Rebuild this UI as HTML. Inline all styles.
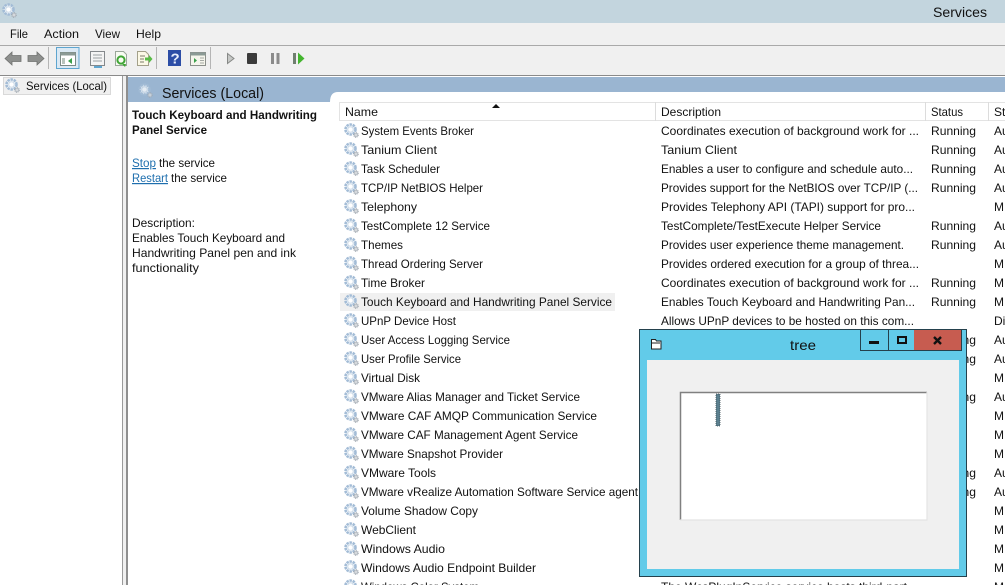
<!DOCTYPE html>
<html><head><meta charset="utf-8"><style>
html,body{margin:0;padding:0;background:#fff;width:1005px;height:585px;overflow:hidden}
svg{display:block}
text{font-family:"Liberation Sans",sans-serif;font-size:12px;fill:#111}
</style></head><body>
<svg width="1005" height="585" viewBox="0 0 1005 585" xmlns="http://www.w3.org/2000/svg">
<defs>
<g id="g">
<circle cx="6.500" cy="6.500" r="5" fill="#eef3f8" stroke="#a3bcd6" stroke-width="2.600" stroke-dasharray="2.400 .8"/>
<circle cx="6.500" cy="6.500" r="2.700" fill="#fff" stroke="#c5d5e4" stroke-width=".8"/>
<circle cx="12" cy="12" r="2.100" fill="#d5d9dd" stroke="#9ea6ae" stroke-width="1.300" stroke-dasharray="1 .6"/>
</g>
</defs>
<rect width="1005" height="23" fill="#c3d5de"/>
<use href="#g" x="2" y="3"/>
<text x="933" y="17" style="font-size:14px" textLength="54" lengthAdjust="spacingAndGlyphs">Services</text>
<rect y="23" width="1005" height="52" fill="#f0f0f0"/>
<rect y="45" width="1005" height="1" fill="#a9a9a9"/>
<text x="10" y="38" textLength="18" lengthAdjust="spacingAndGlyphs">File</text>
<text x="44" y="38" textLength="35" lengthAdjust="spacingAndGlyphs">Action</text>
<text x="95" y="38" textLength="25" lengthAdjust="spacingAndGlyphs">View</text>
<text x="136" y="38" textLength="25" lengthAdjust="spacingAndGlyphs">Help</text>

<!-- toolbar -->
<path d="M5 58.500l7-6.500v3.500h9v6h-9v3.500z" fill="#8d8f8d" stroke="#6f716f" stroke-width=".8"/>
<path d="M44 58.500l-7-6.500v3.500h-9v6h9v3.500z" fill="#8d8f8d" stroke="#6f716f" stroke-width=".8"/>
<rect x="48" y="47" width="1" height="22" fill="#b5b5b5"/>
<rect x="56.500" y="47.500" width="22.500" height="21" fill="#dbe9f4" stroke="#5ea5cf"/>
<rect x="60.500" y="52.500" width="15" height="13" fill="#fff" stroke="#7b8a85"/>
<rect x="60.500" y="52.500" width="15" height="3" fill="#8b9a95"/>
<path d="M72 58v6l-4-3z" fill="#3aa04a"/><rect x="62" y="58" width="3" height="6" fill="#b9c4bd"/>
<rect x="90.500" y="51.500" width="14" height="14" fill="#f4f4f4" stroke="#85898c"/>
<path d="M93 55h9M93 58h9M93 61h9" stroke="#9a9fa2"/><rect x="94" y="66" width="8" height="2" fill="#5ea5cf"/>
<path d="M115.500 51.500h8l3 3v11h-11z" fill="#f7fbf2" stroke="#9aa69a"/>
<circle cx="121" cy="60" r="3.600" fill="none" stroke="#3fa535" stroke-width="2"/><path d="M122 64l4 0-1 3z" fill="#3fa535"/>
<path d="M137.500 51.500h8l3 3v11h-11z" fill="#fbf8e6" stroke="#a3a08a"/>
<path d="M140 56h5M140 59h4M140 62h4" stroke="#7d7d6a"/><path d="M145 57.500h4v-2.500l3.500 4-3.500 4v-2.500h-4z" fill="#58bb45"/>
<rect x="156" y="47" width="1" height="22" fill="#b5b5b5"/>
<rect x="168" y="50" width="13" height="16" fill="#2c4da6"/>
<text x="170.500" y="63.500" style="font-size:15px;font-weight:bold;fill:#e8eefc">?</text>
<rect x="190.500" y="52.500" width="15" height="13" fill="#f5f5ec" stroke="#8b8f8a"/>
<rect x="190.500" y="52.500" width="15" height="3" fill="#8b9a95"/>
<path d="M194 58v5l3-2.500z" fill="#3aa04a"/><path d="M200 58h4M200 60.500h4M200 63h4" stroke="#a5a9a5"/>
<rect x="210" y="47" width="1" height="22" fill="#b5b5b5"/>
<path d="M227.500 53.500l6.500 5-6.500 5z" fill="#c6c8c6" stroke="#868886"/>
<rect x="247" y="53" width="10" height="11" rx="1" fill="#3b3b3b"/>
<rect x="271" y="53" width="3" height="11" fill="#8b8b8b"/><rect x="276.500" y="53" width="3" height="11" fill="#8b8b8b"/>
<rect x="293" y="53" width="3" height="11" fill="#6f7f6f"/><path d="M298 52.500l6.500 6-6.500 6z" fill="#44b52f"/>

<!-- frames -->
<rect y="75" width="1005" height="510" fill="#f0f0f0"/>
<rect y="75" width="1005" height="1" fill="#8a8a8a"/>
<rect x="0" y="76" width="122" height="509" fill="#fff"/>
<rect x="122" y="76" width="1" height="509" fill="#9a9a9a"/>
<rect x="126" y="76" width="2" height="509" fill="#8f8f8f"/>
<rect x="128" y="76" width="877" height="509" fill="#fff"/>
<path d="M128 77H1005V92H338q-8 0-8 10H128z" fill="#9ab5d1"/>
<!-- tree item -->
<rect x="3.500" y="77.500" width="107" height="17" fill="#f0f0f0" stroke="#d9d9d9"/>
<use href="#g" x="5" y="78"/>
<text x="26" y="90" textLength="81" lengthAdjust="spacingAndGlyphs">Services (Local)</text>
<!-- header -->
<use href="#g" x="138" y="83" opacity=".75"/>
<text x="162" y="98" style="font-size:15px" textLength="102" lengthAdjust="spacingAndGlyphs">Services (Local)</text>
<!-- left detail -->
<text x="132" y="119" style="font-weight:bold" textLength="185" lengthAdjust="spacingAndGlyphs">Touch Keyboard and Handwriting</text>
<text x="132" y="134" style="font-weight:bold" textLength="75" lengthAdjust="spacingAndGlyphs">Panel Service</text>
<text x="132" y="167" style="fill:#1f6fae" text-decoration="underline" textLength="24" lengthAdjust="spacingAndGlyphs">Stop</text>
<text x="159" y="167" textLength="56" lengthAdjust="spacingAndGlyphs">the service</text>
<text x="132" y="182" style="fill:#1f6fae" text-decoration="underline" textLength="36" lengthAdjust="spacingAndGlyphs">Restart</text>
<text x="171" y="182" textLength="56" lengthAdjust="spacingAndGlyphs">the service</text>
<text x="132" y="227" textLength="63" lengthAdjust="spacingAndGlyphs">Description:</text>
<text x="132" y="242" textLength="153" lengthAdjust="spacingAndGlyphs">Enables Touch Keyboard and</text>
<text x="132" y="257" textLength="164" lengthAdjust="spacingAndGlyphs">Handwriting Panel pen and ink</text>
<text x="132" y="272" textLength="67" lengthAdjust="spacingAndGlyphs">functionality</text>
<!-- list header -->
<rect x="339" y="102" width="666" height="1" fill="#e3e3e3"/>
<rect x="339" y="120" width="666" height="1" fill="#e3e3e3"/>
<rect x="339" y="102" width="1" height="19" fill="#e3e3e3"/>
<rect x="655" y="102" width="1" height="19" fill="#dcdcdc"/>
<rect x="925" y="102" width="1" height="19" fill="#dcdcdc"/>
<rect x="988" y="102" width="1" height="19" fill="#dcdcdc"/>
<path d="M492 108l4-4 4 4z" fill="#111"/>
<text x="345" y="116" textLength="33" lengthAdjust="spacingAndGlyphs">Name</text>
<text x="661" y="116" textLength="60" lengthAdjust="spacingAndGlyphs">Description</text>
<text x="931" y="116" textLength="32" lengthAdjust="spacingAndGlyphs">Status</text>
<text x="994" y="116">St</text>
<!-- selected row -->
<rect x="340" y="293" width="275" height="18" fill="#f0f0f0"/>
<!-- gears -->
<use href="#g" x="344" y="123"/><use href="#g" x="344" y="142"/><use href="#g" x="344" y="161"/><use href="#g" x="344" y="180"/><use href="#g" x="344" y="199"/><use href="#g" x="344" y="218"/><use href="#g" x="344" y="237"/><use href="#g" x="344" y="256"/><use href="#g" x="344" y="275"/><use href="#g" x="344" y="294"/><use href="#g" x="344" y="313"/><use href="#g" x="344" y="332"/><use href="#g" x="344" y="351"/><use href="#g" x="344" y="370"/><use href="#g" x="344" y="389"/><use href="#g" x="344" y="408"/><use href="#g" x="344" y="427"/><use href="#g" x="344" y="446"/><use href="#g" x="344" y="465"/><use href="#g" x="344" y="484"/><use href="#g" x="344" y="503"/><use href="#g" x="344" y="522"/><use href="#g" x="344" y="541"/><use href="#g" x="344" y="560"/><use href="#g" x="344" y="579"/>
<!-- names -->
<text x="361" y="135" textLength="113" lengthAdjust="spacingAndGlyphs">System Events Broker</text>
<text x="361" y="154" textLength="76" lengthAdjust="spacingAndGlyphs">Tanium Client</text>
<text x="361" y="173" textLength="79" lengthAdjust="spacingAndGlyphs">Task Scheduler</text>
<text x="361" y="192" textLength="122" lengthAdjust="spacingAndGlyphs">TCP/IP NetBIOS Helper</text>
<text x="361" y="211" textLength="56" lengthAdjust="spacingAndGlyphs">Telephony</text>
<text x="361" y="230" textLength="129" lengthAdjust="spacingAndGlyphs">TestComplete 12 Service</text>
<text x="361" y="249" textLength="42" lengthAdjust="spacingAndGlyphs">Themes</text>
<text x="361" y="268" textLength="122" lengthAdjust="spacingAndGlyphs">Thread Ordering Server</text>
<text x="361" y="287" textLength="64" lengthAdjust="spacingAndGlyphs">Time Broker</text>
<text x="361" y="306" textLength="251" lengthAdjust="spacingAndGlyphs">Touch Keyboard and Handwriting Panel Service</text>
<text x="361" y="325" textLength="95" lengthAdjust="spacingAndGlyphs">UPnP Device Host</text>
<text x="361" y="344" textLength="149" lengthAdjust="spacingAndGlyphs">User Access Logging Service</text>
<text x="361" y="363" textLength="100" lengthAdjust="spacingAndGlyphs">User Profile Service</text>
<text x="361" y="382" textLength="59" lengthAdjust="spacingAndGlyphs">Virtual Disk</text>
<text x="361" y="401" textLength="219" lengthAdjust="spacingAndGlyphs">VMware Alias Manager and Ticket Service</text>
<text x="361" y="420" textLength="236" lengthAdjust="spacingAndGlyphs">VMware CAF AMQP Communication Service</text>
<text x="361" y="439" textLength="217" lengthAdjust="spacingAndGlyphs">VMware CAF Management Agent Service</text>
<text x="361" y="458" textLength="142" lengthAdjust="spacingAndGlyphs">VMware Snapshot Provider</text>
<text x="361" y="477" textLength="75" lengthAdjust="spacingAndGlyphs">VMware Tools</text>
<text x="361" y="496" textLength="277" lengthAdjust="spacingAndGlyphs">VMware vRealize Automation Software Service agent</text>
<text x="361" y="515" textLength="117" lengthAdjust="spacingAndGlyphs">Volume Shadow Copy</text>
<text x="361" y="534" textLength="55" lengthAdjust="spacingAndGlyphs">WebClient</text>
<text x="361" y="553" textLength="84" lengthAdjust="spacingAndGlyphs">Windows Audio</text>
<text x="361" y="572" textLength="175" lengthAdjust="spacingAndGlyphs">Windows Audio Endpoint Builder</text>
<text x="361" y="591" textLength="118" lengthAdjust="spacingAndGlyphs">Windows Color System</text>
<!-- descriptions -->
<text x="661" y="135" textLength="258" lengthAdjust="spacingAndGlyphs">Coordinates execution of background work for ...</text>
<text x="661" y="154" textLength="76" lengthAdjust="spacingAndGlyphs">Tanium Client</text>
<text x="661" y="173" textLength="252" lengthAdjust="spacingAndGlyphs">Enables a user to configure and schedule auto...</text>
<text x="661" y="192" textLength="257" lengthAdjust="spacingAndGlyphs">Provides support for the NetBIOS over TCP/IP (...</text>
<text x="661" y="211" textLength="254" lengthAdjust="spacingAndGlyphs">Provides Telephony API (TAPI) support for pro...</text>
<text x="661" y="230" textLength="220" lengthAdjust="spacingAndGlyphs">TestComplete/TestExecute Helper Service</text>
<text x="661" y="249" textLength="243" lengthAdjust="spacingAndGlyphs">Provides user experience theme management.</text>
<text x="661" y="268" textLength="258" lengthAdjust="spacingAndGlyphs">Provides ordered execution for a group of threa...</text>
<text x="661" y="287" textLength="258" lengthAdjust="spacingAndGlyphs">Coordinates execution of background work for ...</text>
<text x="661" y="306" textLength="254" lengthAdjust="spacingAndGlyphs">Enables Touch Keyboard and Handwriting Pan...</text>
<text x="661" y="325" textLength="253" lengthAdjust="spacingAndGlyphs">Allows UPnP devices to be hosted on this com...</text>
<text x="661" y="591" textLength="256" lengthAdjust="spacingAndGlyphs">The WcsPlugInService service hosts third-part...</text>
<!-- status -->
<text x="931" y="135" textLength="45" lengthAdjust="spacingAndGlyphs">Running</text>
<text x="931" y="154" textLength="45" lengthAdjust="spacingAndGlyphs">Running</text>
<text x="931" y="173" textLength="45" lengthAdjust="spacingAndGlyphs">Running</text>
<text x="931" y="192" textLength="45" lengthAdjust="spacingAndGlyphs">Running</text>
<text x="931" y="230" textLength="45" lengthAdjust="spacingAndGlyphs">Running</text>
<text x="931" y="249" textLength="45" lengthAdjust="spacingAndGlyphs">Running</text>
<text x="931" y="287" textLength="45" lengthAdjust="spacingAndGlyphs">Running</text>
<text x="931" y="306" textLength="45" lengthAdjust="spacingAndGlyphs">Running</text>
<text x="931" y="344" textLength="45" lengthAdjust="spacingAndGlyphs">Running</text>
<text x="931" y="363" textLength="45" lengthAdjust="spacingAndGlyphs">Running</text>
<text x="931" y="401" textLength="45" lengthAdjust="spacingAndGlyphs">Running</text>
<text x="931" y="477" textLength="45" lengthAdjust="spacingAndGlyphs">Running</text>
<text x="931" y="496" textLength="45" lengthAdjust="spacingAndGlyphs">Running</text>
<!-- startup -->
<text x="994" y="135">Au</text><text x="994" y="154">Au</text><text x="994" y="173">Au</text><text x="994" y="192">Au</text><text x="994" y="211">M</text><text x="994" y="230">Au</text><text x="994" y="249">Au</text><text x="994" y="268">M</text><text x="994" y="287">M</text><text x="994" y="306">M</text><text x="994" y="325">Di</text><text x="994" y="344">Au</text><text x="994" y="363">Au</text><text x="994" y="382">M</text><text x="994" y="401">Au</text><text x="994" y="420">M</text><text x="994" y="439">M</text><text x="994" y="458">M</text><text x="994" y="477">Au</text><text x="994" y="496">Au</text><text x="994" y="515">M</text><text x="994" y="534">M</text><text x="994" y="553">M</text><text x="994" y="572">M</text><text x="994" y="591">M</text>

<!-- tree window -->
<rect x="639.500" y="329.500" width="327" height="247" fill="#62cbe9" stroke="#24414d"/>
<rect x="647" y="360" width="312" height="209" fill="#f0f0f0"/>
<path d="M651.500 339.500h4l1 1.500h4.500v8h-9.500z" fill="#fff" stroke="#222"/>
<path d="M652 343h8" stroke="#222"/>
<text x="790" y="350" style="font-size:14px" textLength="26" lengthAdjust="spacingAndGlyphs">tree</text>
<rect x="860.500" y="329.500" width="101" height="21" fill="#62cbe9" stroke="#24414d"/>
<rect x="888" y="330" width="1" height="20" fill="#24414d"/>
<rect x="914" y="330" width="47" height="20" fill="#c75c50"/>
<rect x="869" y="341" width="10" height="3" fill="#111"/>
<rect x="898" y="337" width="8" height="6" fill="none" stroke="#111" stroke-width="2"/>
<path d="M934 337l7 7M941 337l-7 7" stroke="#111" stroke-width="2.400"/>
<rect x="680" y="392" width="247" height="128" fill="#fff"/>
<path d="M927 392.500H680.500V520" fill="none" stroke="#808080" stroke-width="1.500"/>
<path d="M680 520h247V392" fill="none" stroke="#e4e4e4" stroke-width="1.200"/>
<rect x="716" y="394" width="4" height="32" fill="#5b7f8e" stroke="#3d4f55" stroke-width=".8" stroke-dasharray="1 1"/>
</svg>
</body></html>
